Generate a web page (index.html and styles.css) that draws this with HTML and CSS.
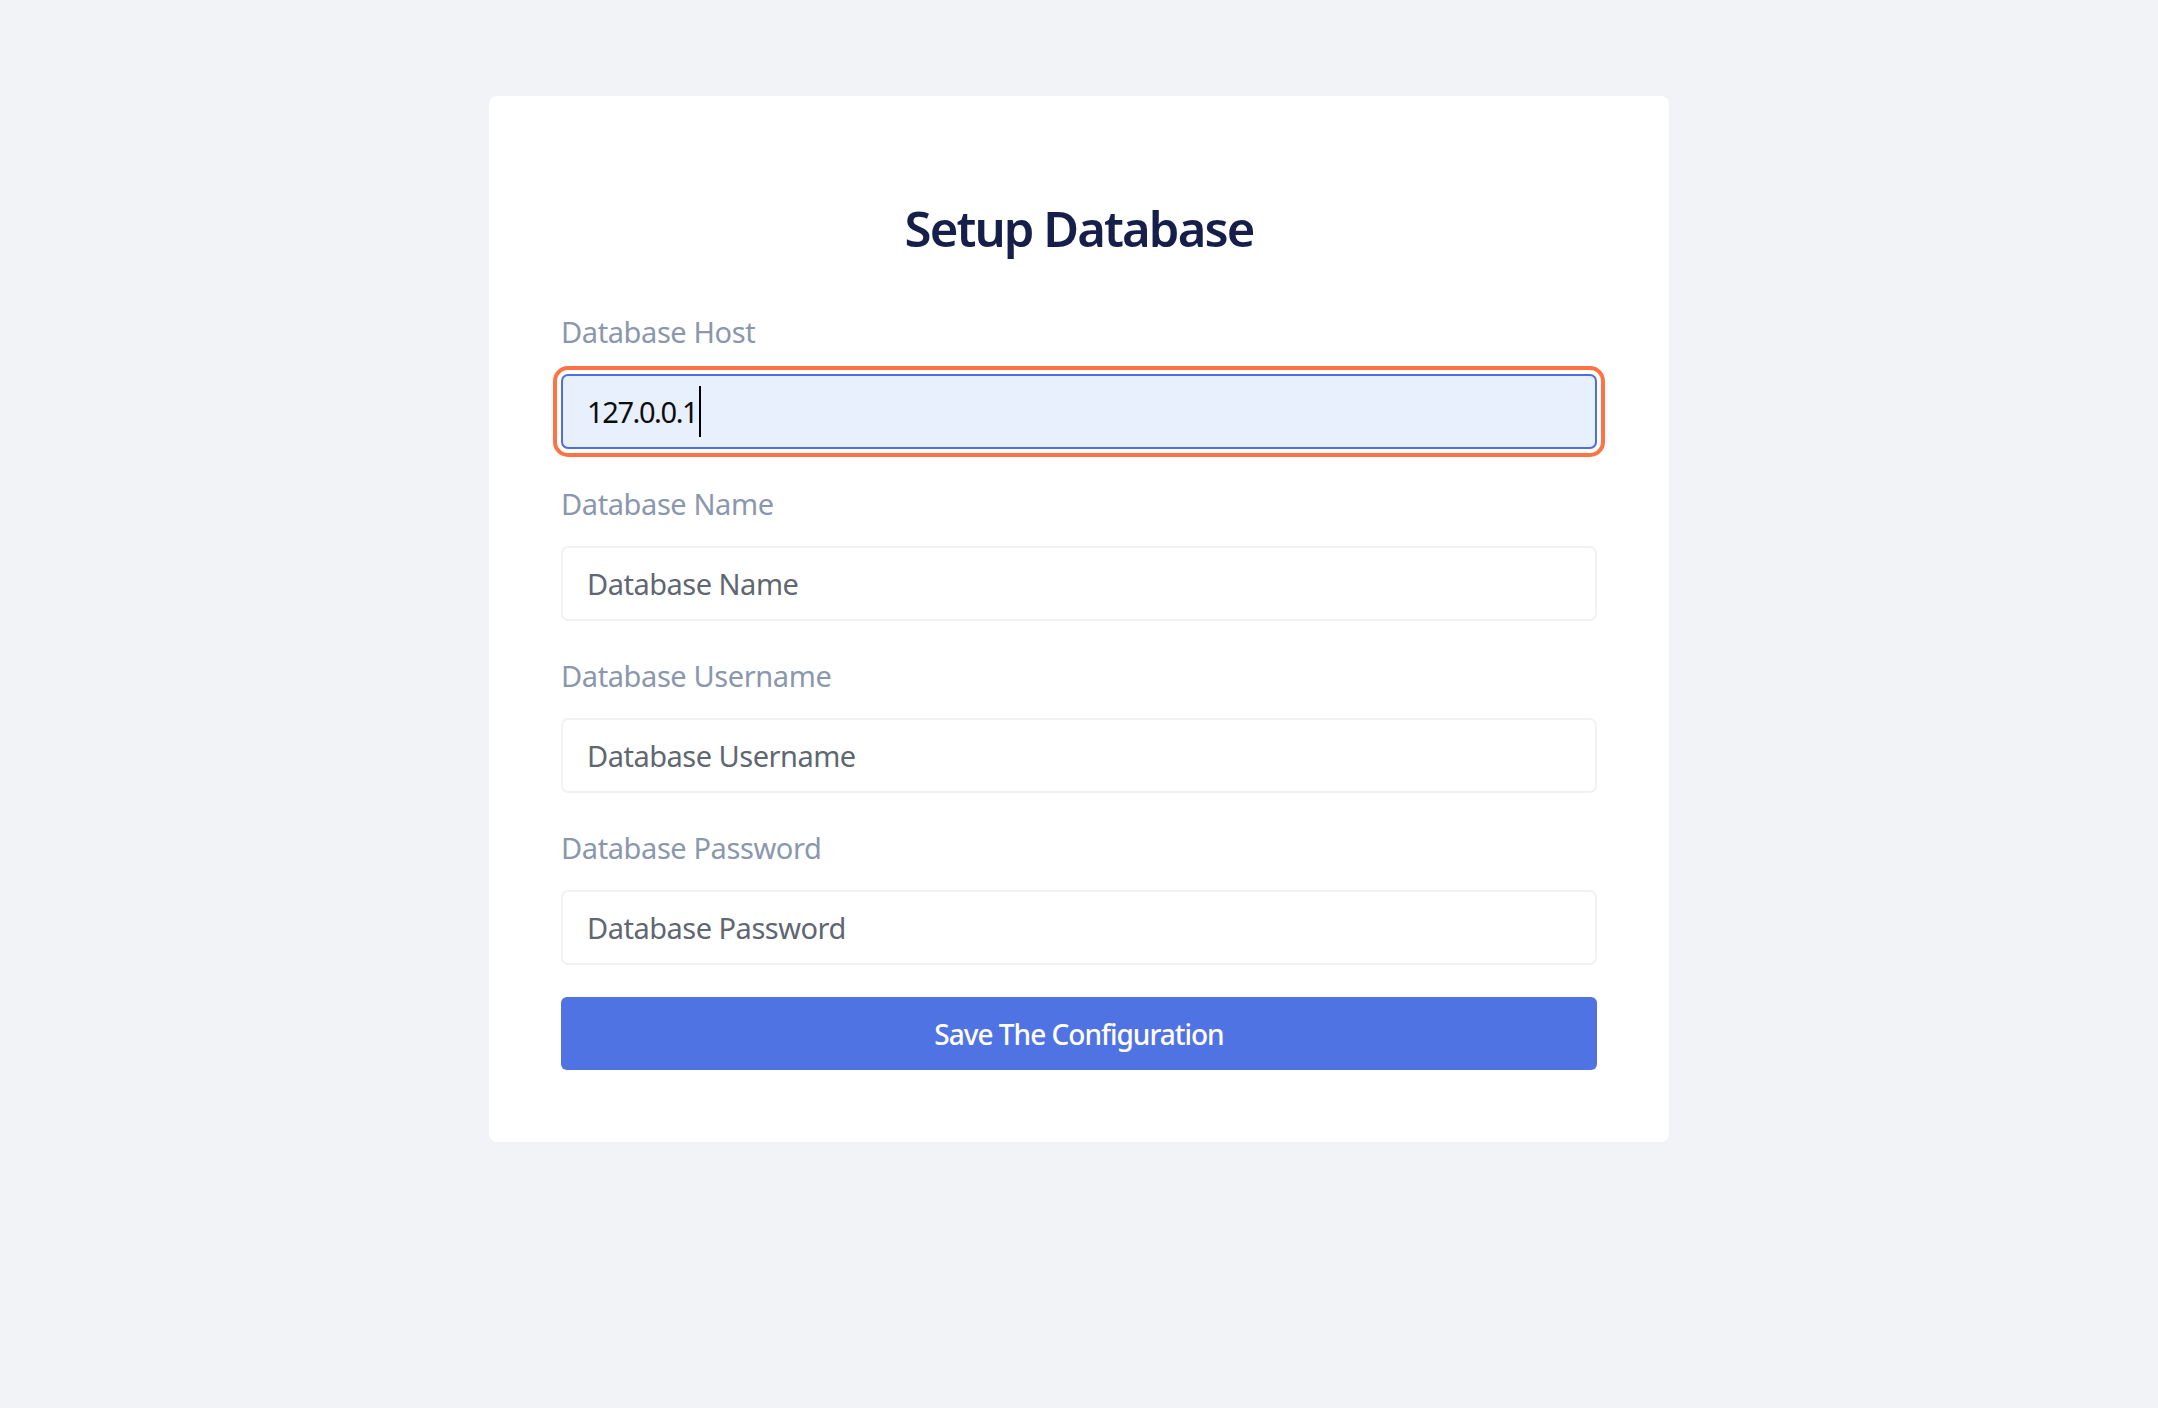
FILE: index.html
```html
<!DOCTYPE html>
<html lang="en">
<head>
<meta charset="utf-8">
<title>Setup Database</title>
<link rel="stylesheet" href="styles.css">
</head>
<body>
<main class="card">
  <h1 class="title">Setup Database</h1>
  <form class="form">
    <div class="field">
      <label class="label" for="host">Database Host</label>
      <div class="input input--focused" id="host"><span class="input-value">127.0.0.1</span><span class="caret"></span></div>
    </div>
    <div class="field">
      <label class="label" for="name">Database Name</label>
      <input class="input" id="name" type="text" placeholder="Database Name">
    </div>
    <div class="field">
      <label class="label" for="user">Database Username</label>
      <input class="input" id="user" type="text" placeholder="Database Username">
    </div>
    <div class="field">
      <label class="label" for="pass">Database Password</label>
      <input class="input" id="pass" type="text" placeholder="Database Password">
    </div>
    <button class="button" type="button">Save The Configuration</button>
  </form>
</main>
</body>
</html>
```
FILE: styles.css
```css
* { box-sizing: border-box; }

html, body {
  margin: 0;
  padding: 0;
}

body {
  background: #f1f3f7;
  font-family: "Noto Sans", "Open Sans", sans-serif;
  min-height: 1408px;
  padding-top: 96px;
}

.card {
  width: 1180px;
  margin: 0 auto;
  background: #ffffff;
  border-radius: 8px;
  padding: 102px 72px 72px 72px;
}

.title {
  margin: 0 0 56px 0;
  font-size: 49px;
  line-height: 60px;
  font-weight: 600;
  color: #161f4a;
  text-align: center;
  letter-spacing: -1.9px;
}

.form {
  display: flex;
  flex-direction: column;
  gap: 37px;
}

.field {
  display: flex;
  flex-direction: column;
}

.label {
  font-size: 29px;
  line-height: 36px;
  color: #8a97ad;
  letter-spacing: -0.4px;
  margin-bottom: 24px;
}

.input {
  display: block;
  width: 100%;
  height: 75px;
  border: 2px solid #f1f2f4;
  border-radius: 7px;
  background: #ffffff;
  padding: 0 24px;
  font-family: "Noto Sans", "Open Sans", sans-serif;
  font-size: 29px;
  letter-spacing: -0.5px;
  color: #1b1f24;
  outline: none;
}

.input::placeholder {
  color: #5f6771;
  opacity: 1;
}

.input--focused {
  display: flex;
  align-items: center;
  background: #e8effd;
  border-color: #4d6fe0;
  outline: 4px solid #ff7245;
  outline-offset: 4px;
  color: #0d0d0d;
}

.input-value {
  letter-spacing: -1.4px;
}

.caret {
  display: inline-block;
  width: 2px;
  height: 51px;
  margin-left: 2px;
  background: #000000;
}

.button {
  margin-top: -5px;
  width: 100%;
  height: 73px;
  border: none;
  border-radius: 6px;
  background: #5073e3;
  color: #ffffff;
  font-family: "Noto Sans", "Open Sans", sans-serif;
  font-size: 28px;
  font-weight: 500;
  letter-spacing: -1px;
  cursor: pointer;
}
```
